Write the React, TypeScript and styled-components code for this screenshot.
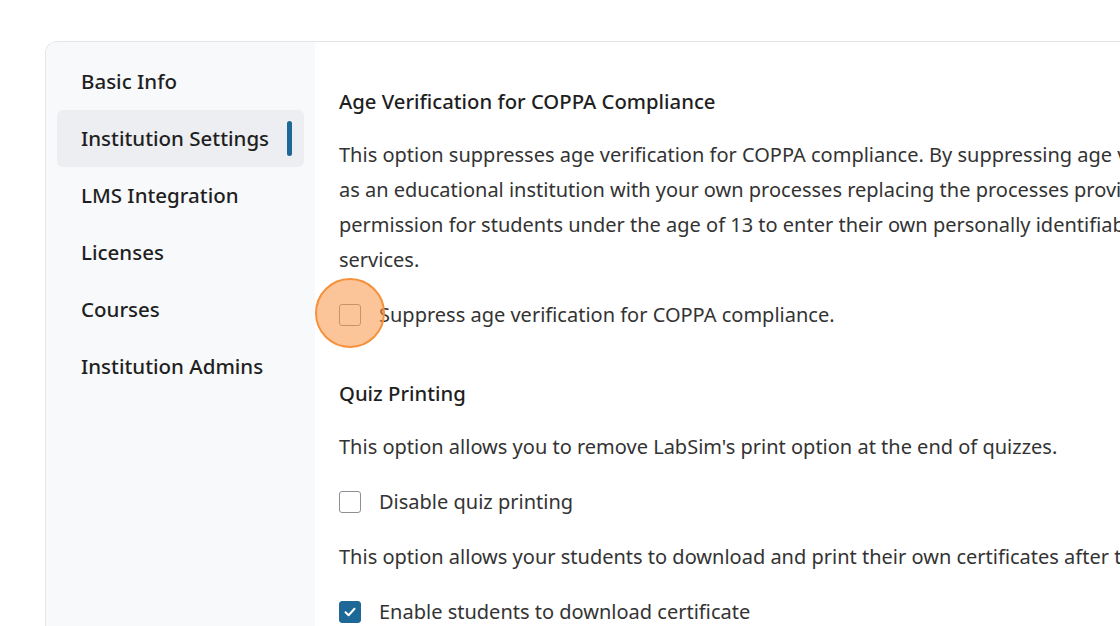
import React from "react";
import styled, { createGlobalStyle } from "styled-components";

const Global = createGlobalStyle`
  html, body { margin: 0; padding: 0; background: #ffffff; overflow: hidden; }
  body { font-family: "Noto Sans", "Open Sans", sans-serif; color: #2b2b2b; }
`;

const Page = styled.div`
  padding: 41px 0 0 45px;
  width: 1120px;
  height: 626px;
  box-sizing: border-box;
  overflow: hidden;
`;

const Card = styled.div`
  display: flex;
  width: 1300px;
  border: 1px solid #e3e6e9;
  border-right: none;
  border-radius: 12px 0 0 0;
  height: 700px;
  overflow: hidden;
`;

const Sidebar = styled.nav`
  width: 269px;
  flex: none;
  background: #f7f9fb;
  padding: 11px 11px;
  box-sizing: border-box;
  display: flex;
  flex-direction: column;
`;

const NavItem = styled.div<{ $active?: boolean }>`
  height: 57px;
  display: flex;
  align-items: center;
  justify-content: space-between;
  padding: 0 12px 2px 24px;
  box-sizing: border-box;
  border-radius: 6px;
  font-size: 20.5px;
  font-weight: 500;
  color: #1f1f1f;
  background: ${(p) => (p.$active ? "#eceef1" : "transparent")};
`;

const ActiveBar = styled.span`
  width: 5px;
  height: 35px;
  margin-top: 2px;
  border-radius: 3px;
  background: #1d6896;
`;

const Main = styled.main`
  flex: 1;
  padding: 46px 0 0 24px;
  display: flex;
  flex-direction: column;
  background: #ffffff;
`;

const Section = styled.section`
  display: flex;
  flex-direction: column;
  gap: 20px;
  & + & {
    margin-top: 48px;
  }
`;

const Heading = styled.h2`
  margin: 0 0 3px;
  font-size: 20.3px;
  line-height: 26px;
  font-weight: 500;
  color: #1f1f1f;
`;

const Para = styled.p`
  margin: 0;
  font-size: 20px;
  line-height: 35px;
  color: #333333;
  white-space: nowrap;
`;

const Row = styled.label`
  position: relative;
  display: flex;
  align-items: center;
  gap: 18px;
  height: 35px;
  font-size: 20px;
  color: #333333;
`;

const Box = styled.span<{ $checked?: boolean }>`
  width: 22px;
  height: 22px;
  box-sizing: border-box;
  border-radius: 3px;
  border: 1.5px solid ${(p) => (p.$checked ? "#1d6896" : "#8c9096")};
  background: ${(p) => (p.$checked ? "#1d6896" : "#ffffff")};
  display: flex;
  align-items: center;
  justify-content: center;
  flex: none;
`;

const Highlight = styled.span`
  position: absolute;
  left: -24px;
  top: 50%;
  width: 70px;
  height: 70px;
  margin-top: -37px;
  border-radius: 50%;
  box-sizing: border-box;
  border: 2.5px solid #f6913b;
  background: rgba(250, 150, 70, 0.55);
  pointer-events: none;
`;

const Check = () => (
  <svg width="14" height="14" viewBox="0 0 14 14" fill="none">
    <path d="M2.5 7.2 L5.6 10.2 L11.5 3.8" stroke="#ffffff" strokeWidth="2" strokeLinecap="round" strokeLinejoin="round" />
  </svg>
);

const nav = ["Basic Info", "Institution Settings", "LMS Integration", "Licenses", "Courses", "Institution Admins"];

export default function App() {
  return (
    <>
      <Global />
      <Page>
        <Card>
          <Sidebar>
            {nav.map((n) => (
              <NavItem key={n} $active={n === "Institution Settings"}>
                {n}
                {n === "Institution Settings" && <ActiveBar />}
              </NavItem>
            ))}
          </Sidebar>
          <Main>
            <Section>
              <Heading>Age Verification for COPPA Compliance</Heading>
              <Para>
                This option suppresses age verification for COPPA compliance. By suppressing age verification, you are acting
                <br />
                as an educational institution with your own processes replacing the processes provided by TestOut to obtain
                <br />
                permission for students under the age of 13 to enter their own personally identifiable information into TestOut
                <br />
                services.
              </Para>
              <Row>
                <Box />
                Suppress age verification for COPPA compliance.
                <Highlight />
              </Row>
            </Section>
            <Section>
              <Heading>Quiz Printing</Heading>
              <Para>This option allows you to remove LabSim's print option at the end of quizzes.</Para>
              <Row>
                <Box />
                Disable quiz printing
              </Row>
              <Para>This option allows your students to download and print their own certificates after they complete a course.</Para>
              <Row>
                <Box $checked>
                  <Check />
                </Box>
                Enable students to download certificate
              </Row>
            </Section>
          </Main>
        </Card>
      </Page>
    </>
  );
}
